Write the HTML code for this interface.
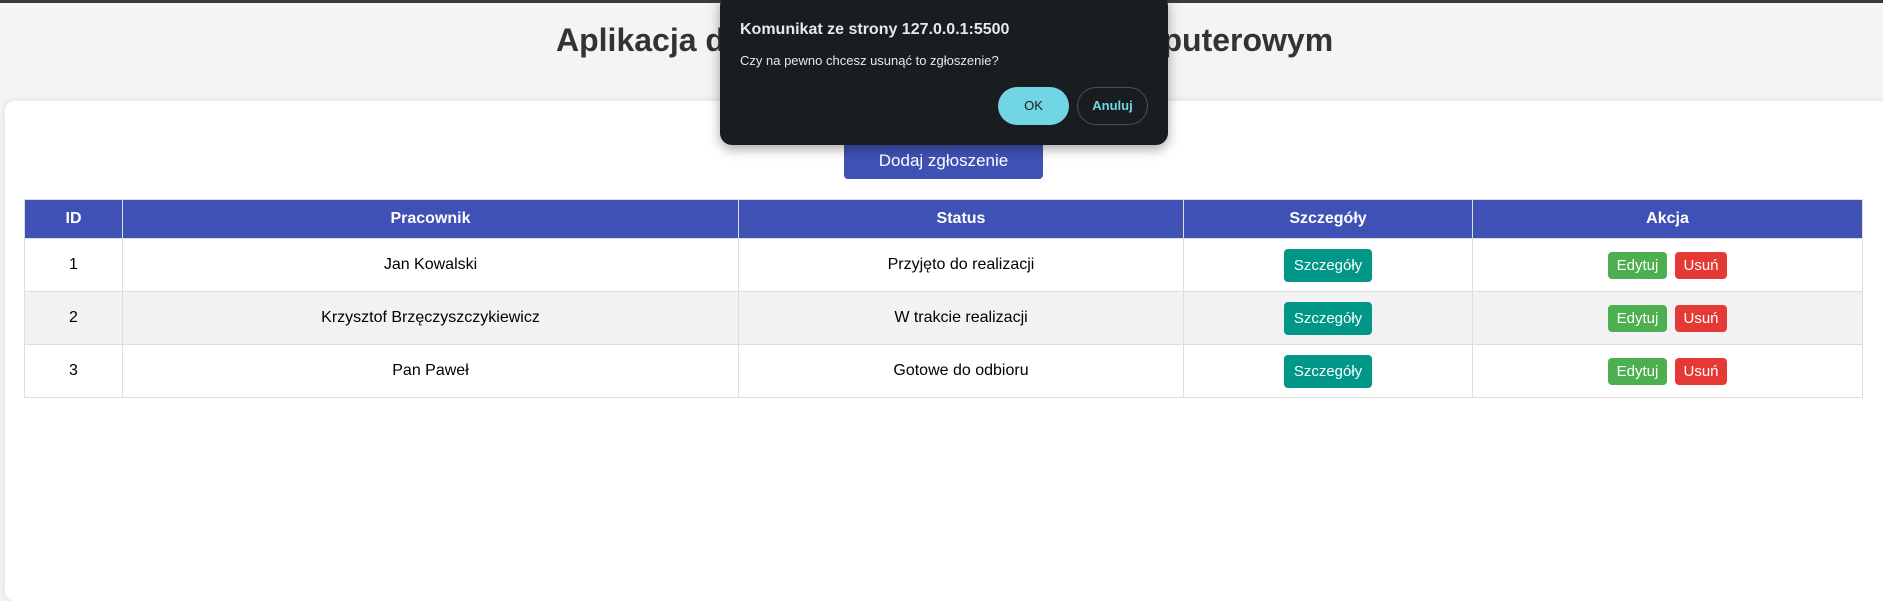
<!DOCTYPE html>
<html><head><meta charset="utf-8"><style>
*{box-sizing:border-box;margin:0;padding:0}
body{width:1883px;height:493px;background:#f4f4f4;font-family:"Liberation Sans",Arial,sans-serif;position:relative;overflow:hidden}
.top{position:absolute;left:0;top:0;width:1883px;height:3px;background:#3a3a3a}
h1{position:absolute;left:556px;top:22px;width:775px;font-size:32px;font-weight:bold;color:#333;text-align:justify;text-align-last:justify;white-space:nowrap}
.card{position:absolute;left:5px;top:101px;width:1890px;height:500px;background:#fff;border-radius:10px;box-shadow:0 0 8px rgba(0,0,0,.1)}
.add{position:absolute;left:844px;top:143px;width:199px;height:36px;background:#3f51b5;color:#fff;border-radius:0 0 4px 4px;font-size:17px;text-align:center;line-height:36px}
table{position:absolute;left:24px;top:199px;width:1839px;border-collapse:collapse;font-size:16px}
td,th{border:1px solid #ddd;text-align:center;color:#000}
th{background:#3f51b5;color:#fff;height:39px;font-weight:bold;border-color:#ddd}
td{height:53px}
tr.g td{background:#f2f2f2}
.b{display:inline-block;color:#fff;border-radius:4px;font-size:15px;vertical-align:middle}
.s{background:#009688;width:88px;height:33px;line-height:33px}
.e{background:#4caf50;width:59px;height:27px;line-height:27px;margin-right:8px}
.u{background:#e53935;width:52px;height:27px;line-height:27px}
.dlg{position:absolute;left:720px;top:-6px;width:448px;height:151px;background:#1a1d1f;border-radius:12px;box-shadow:0 4px 12px rgba(0,0,0,.35);font-family:"Liberation Sans",sans-serif;color:#e8e8e8}
.t{position:absolute;left:20px;top:27px;font-size:16px;font-weight:bold}
.m{position:absolute;left:20px;top:59px;font-size:13px}
.ok{position:absolute;left:278px;top:93px;width:71px;height:38px;border-radius:19px;background:#71d6e4;color:#1a1d1f;font-size:13px;text-align:center;line-height:38px}
.an{position:absolute;left:357px;top:93px;width:71px;height:38px;border-radius:19px;border:1px solid #4a5257;color:#71d6e4;font-size:13px;font-weight:bold;text-align:center;line-height:36px}
</style></head><body>
<div class="top"></div>
<h1>Aplikacja do zarządzania serwisem komputerowym</h1>
<div class="card"></div>
<div class="add">Dodaj zgłoszenie</div>
<table>
<colgroup><col style="width:98px"><col style="width:616px"><col style="width:445px"><col style="width:289px"><col></colgroup>
<tr><th>ID</th><th>Pracownik</th><th>Status</th><th>Szczegóły</th><th>Akcja</th></tr>
<tr><td>1</td><td>Jan Kowalski</td><td>Przyjęto do realizacji</td><td><span class="b s">Szczegóły</span></td><td><span class="b e">Edytuj</span><span class="b u">Usuń</span></td></tr>
<tr class="g"><td>2</td><td>Krzysztof Brzęczyszczykiewicz</td><td>W trakcie realizacji</td><td><span class="b s">Szczegóły</span></td><td><span class="b e">Edytuj</span><span class="b u">Usuń</span></td></tr>
<tr><td>3</td><td>Pan Paweł</td><td>Gotowe do odbioru</td><td><span class="b s">Szczegóły</span></td><td><span class="b e">Edytuj</span><span class="b u">Usuń</span></td></tr>
</table>
<div class="dlg">
<div class="t">Komunikat ze strony 127.0.0.1:5500</div>
<div class="m">Czy na pewno chcesz usunąć to zgłoszenie?</div>
<div class="ok">OK</div>
<div class="an">Anuluj</div>
</div>
</body></html>
